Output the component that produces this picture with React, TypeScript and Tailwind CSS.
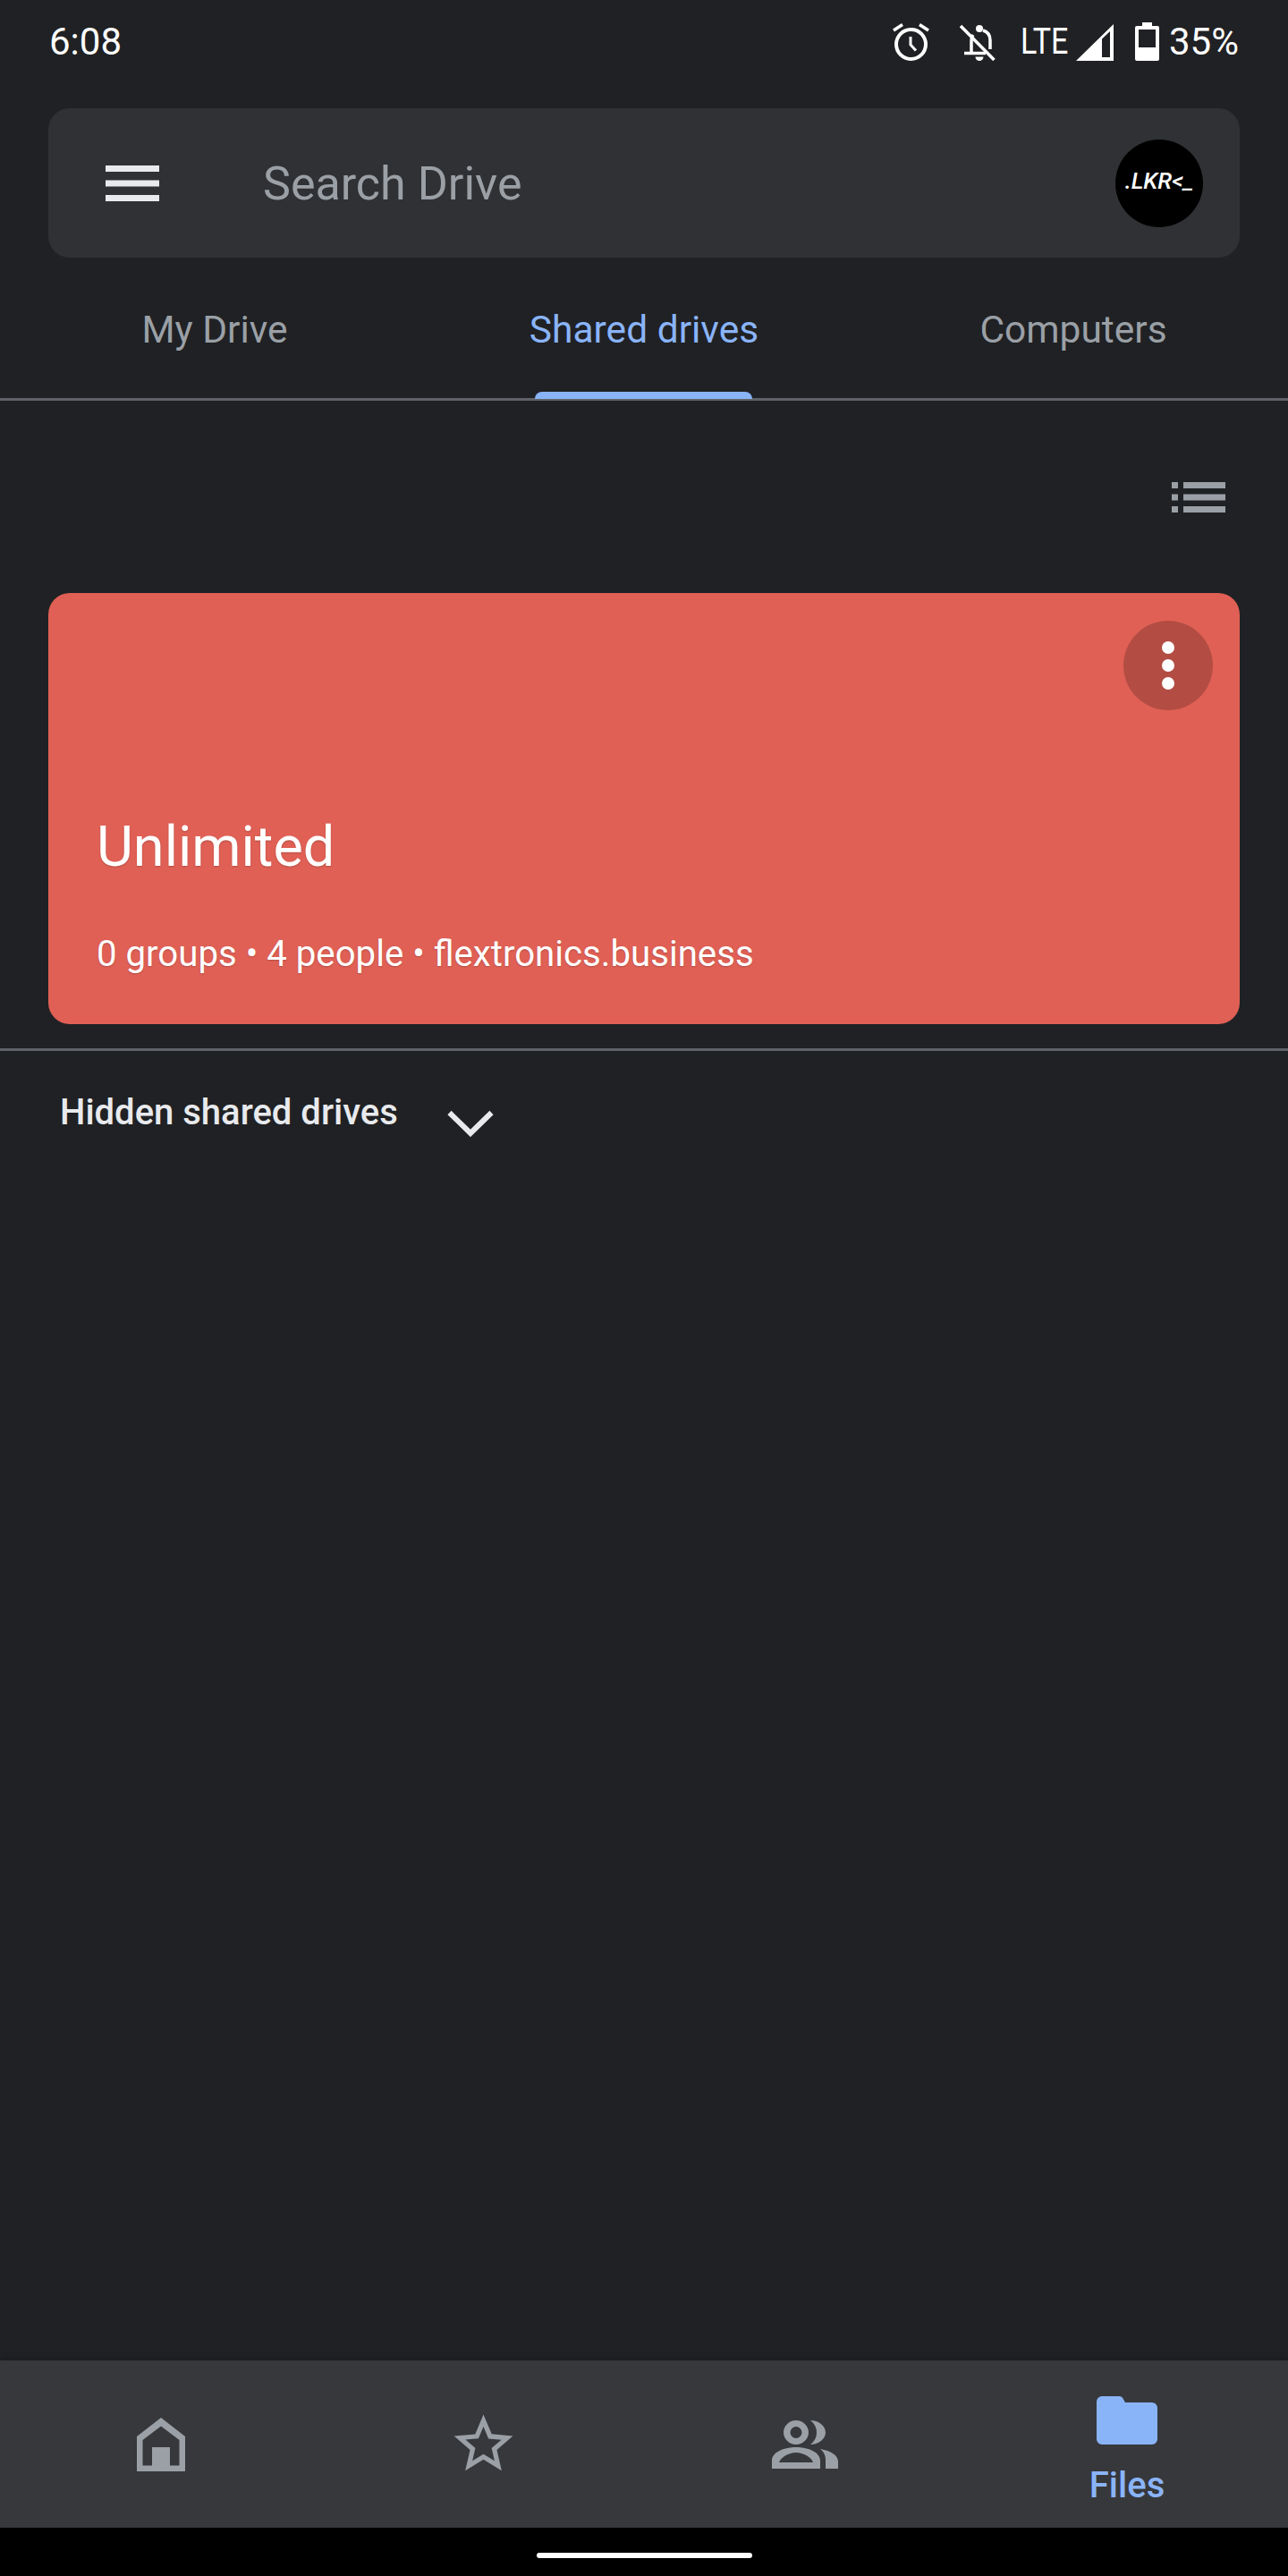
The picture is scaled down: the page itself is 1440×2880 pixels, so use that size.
import React from "react";

const sans = "font-['Roboto','Liberation_Sans',sans-serif]";

function Alarm() {
  return (
    <svg width="41" height="42" viewBox="0 0 41 42" fill="none" stroke="#fff" strokeWidth="4">
      <circle cx="20.5" cy="23.5" r="16.5" />
      <path d="M1 8 11 1.5M30 1.5 40 8" strokeWidth="3.5" />
      <path d="M20 15v9l6 6.5" strokeWidth="3" />
    </svg>
  );
}

function BellOff() {
  return (
    <svg width="41" height="42" viewBox="0 0 41 42" fill="none" stroke="#fff" strokeWidth="3.5">
      <path d="M1 3 38.500 41" />
      <path d="M5 33.500H29" />
      <path d="M34 29V19C34 13 31 9.500 26 8M15 13C13.500 15 13 17 13 20V33" />
      <circle cx="22" cy="6" r="4" fill="#fff" stroke="none" />
      <path d="M17.500 37.500h9a4.500 4.500 0 0 1-9 0Z" fill="#fff" stroke="none" />
    </svg>
  );
}

function Signal() {
  return (
    <svg width="42" height="41" viewBox="0 0 42 41">
      <path fillRule="evenodd" fill="#fff" d="M0 41 42 0V41ZM29 37H38V8L29 16.500Z" />
    </svg>
  );
}

function Battery() {
  return (
    <svg width="27" height="43" viewBox="0 0 27 43">
      <path
        fillRule="evenodd"
        fill="#fff"
        d="M8 0H19V4H25A2 2 0 0 1 27 6V41A2 2 0 0 1 25 43H2A2 2 0 0 1 0 41V6A2 2 0 0 1 2 4H8ZM4 8V28H23V8Z"
      />
    </svg>
  );
}

function Hamburger() {
  return (
    <svg width="60" height="40" viewBox="0 0 60 40" fill="#e8eaed">
      <rect y="0" width="60" height="7" />
      <rect y="16.500" width="60" height="7" />
      <rect y="33" width="60" height="7" />
    </svg>
  );
}

function ListIcon() {
  return (
    <svg width="60" height="34" viewBox="0 0 60 34" fill="#9aa0a6">
      <rect x="0" y="0" width="7" height="7" />
      <rect x="13" y="0" width="47" height="7" />
      <rect x="0" y="13.500" width="7" height="7" />
      <rect x="13" y="13.500" width="47" height="7" />
      <rect x="0" y="27" width="7" height="7" />
      <rect x="13" y="27" width="47" height="7" />
    </svg>
  );
}

function HomeIcon() {
  return (
    <svg width="54" height="60" viewBox="0 0 54 60">
      <path
        fillRule="evenodd"
        fill="#9aa0a6"
        d="M27 0 54 21V60H0V21ZM27 9.500 6.500 25V53.500H17V33H37V53.500H47.500V25Z"
      />
    </svg>
  );
}

function StarIcon() {
  return (
    <svg width="79" height="79" viewBox="0 0 24 24" fill="#9aa0a6">
      <path d="M22 9.240l-7.190-.62L12 2 9.190 8.630 2 9.240l5.460 4.730L5.820 21 12 17.270 18.180 21l-1.630-7.030L22 9.240zM12 15.400l-3.760 2.270 1-4.280-3.320-2.880 4.380-.38L12 6.100l1.710 4.040 4.380.38-3.320 2.880 1 4.280L12 15.400z" />
    </svg>
  );
}

function PeopleIcon() {
  return (
    <svg width="74" height="54" viewBox="0 0 74 54" fill="#9aa0a6">
      <path
        fillRule="evenodd"
        d="M27 0C34.500 0 41 6 41 13.500S34.500 27 27 27 13 21 13 13.500 19.500 0 27 0ZM27 7A6.500 6.500 0 1 0 27 20 6.500 6.500 0 1 0 27 7Z"
      />
      <path d="M43 0C52 0 60 6 60 13.500S52 27 43 27C48 23 50 18.500 50 13.500S48 4 43 0Z" />
      <path
        fillRule="evenodd"
        d="M0 54V45C0 35 15 30 27 30S54 35 54 45V54ZM8 47H46C44 41 35 36 27 36S10 41 8 47Z"
      />
      <path d="M54 32C66 34 74 39 74 46V54H60V45C60 39 58 35 54 32Z" />
    </svg>
  );
}

function FolderIcon() {
  return (
    <svg width="68" height="54" viewBox="0 0 68 54">
      <path
        fill="#8ab4f8"
        d="M6 0H25C27 0 28.500 .8 29.500 2.500L32 7H62A6 6 0 0 1 68 13V48A6 6 0 0 1 62 54H6A6 6 0 0 1 0 48V6A6 6 0 0 1 6 0Z"
      />
    </svg>
  );
}

export default function App() {
  return (
    <div className={`flex h-[2880px] w-[1440px] flex-col overflow-hidden bg-[#202124] ${sans}`}>
      {/* Status bar */}
      <div className="flex h-[121px] items-start justify-between px-[55px] pt-[26px] text-[42px] leading-[42px] text-white">
        <span>6:08</span>
        <div className="flex items-start">
          <Alarm />
          <div className="ml-[34px]">
            <BellOff />
          </div>
          <span className="ml-[27px] w-[55px] origin-left scale-x-[0.85] text-[40px]">LTE</span>
          <div className="ml-[7px] mt-[1px]">
            <Signal />
          </div>
          <div className="ml-[24px] -mt-[1px]">
            <Battery />
          </div>
          <span className="ml-[11px]">35%</span>
        </div>
      </div>

      {/* Search */}
      <div className="mx-[54px] flex h-[167px] items-center rounded-[24px] bg-[#303134] pl-[64px] pr-[41px]">
        <Hamburger />
        <span className="ml-[116px] pt-[2px] text-[52px] text-[#9aa0a6]">Search Drive</span>
        <div className="ml-auto flex size-[98px] items-center justify-center rounded-full bg-black pb-[4px] text-[26px] font-medium italic text-white">
          .LKR&lt;_
        </div>
      </div>

      {/* Tabs */}
      <div className="grid h-[160px] grid-cols-3 border-b-[3px] border-[#5f6368] text-[42.5px]">
        <div className="flex items-center justify-center pt-[4px] text-[#9aa0a6]">My Drive</div>
        <div className="relative flex items-center justify-center pt-[4px] text-[#8ab4f8]">
          Shared drives
          <div className="absolute -bottom-[1px] left-[118px] h-[8px] w-[243px] rounded-t-[8px] bg-[#8ab4f8]" />
        </div>
        <div className="flex items-center justify-center pt-[4px] text-[#9aa0a6]">Computers</div>
      </div>

      {/* View toggle */}
      <div className="flex h-[215px] items-start justify-end pr-[70px] pt-[91px]">
        <ListIcon />
      </div>

      {/* Drive card */}
      <div className="relative mx-[54px] flex h-[482px] flex-col justify-end rounded-[24px] bg-[#e06055] pb-[54px] pl-[54px] text-white [text-shadow:0_1px_2px_rgba(0,0,0,0.2)]">
        <button className="absolute right-[30px] top-[31px] flex size-[100px] flex-col items-center justify-center gap-[6px] rounded-full bg-[#b34d44]">
          <span className="size-[14px] rounded-full bg-white" />
          <span className="size-[14px] rounded-full bg-white" />
          <span className="size-[14px] rounded-full bg-white" />
        </button>
        <div className="text-[63px] leading-[72px]">Unlimited</div>
        <div className="mt-[60px] text-[40.2px] leading-[48px]">0 groups • 4 people • flextronics.business</div>
      </div>

      <div className="mt-[27px] h-[3px] bg-[#5f6368]" />

      {/* Hidden drives */}
      <div className="flex items-start pl-[67px] pt-[45px] text-[#e8eaed]">
        <span className="text-[40px] font-medium leading-[48px]">Hidden shared drives</span>
        <svg
          className="ml-[55px] mt-[21px]"
          width="52"
          height="30"
          viewBox="0 0 52 30"
          fill="none"
          stroke="#e8eaed"
          strokeWidth="6"
        >
          <path d="M2.500 3 26 26 49.500 3" />
        </svg>
      </div>

      <div className="flex-1" />

      {/* Bottom nav */}
      <div className="grid h-[187px] grid-cols-4 bg-[#37383c] shadow-[0_-3px_6px_rgba(0,0,0,0.15)]">
        <div className="flex items-center justify-center">
          <HomeIcon />
        </div>
        <div className="flex items-center justify-center">
          <StarIcon />
        </div>
        <div className="flex items-center justify-center">
          <PeopleIcon />
        </div>
        <div className="flex flex-col items-center pt-[40px]">
          <FolderIcon />
          <span className="mt-[26px] text-[40px] font-medium leading-[40px] text-[#8ab4f8]">Files</span>
        </div>
      </div>

      {/* System nav */}
      <div className="flex h-[54px] items-start justify-center bg-black pt-[28px]">
        <div className="h-[6px] w-[241px] rounded-full bg-white" />
      </div>
    </div>
  );
}
